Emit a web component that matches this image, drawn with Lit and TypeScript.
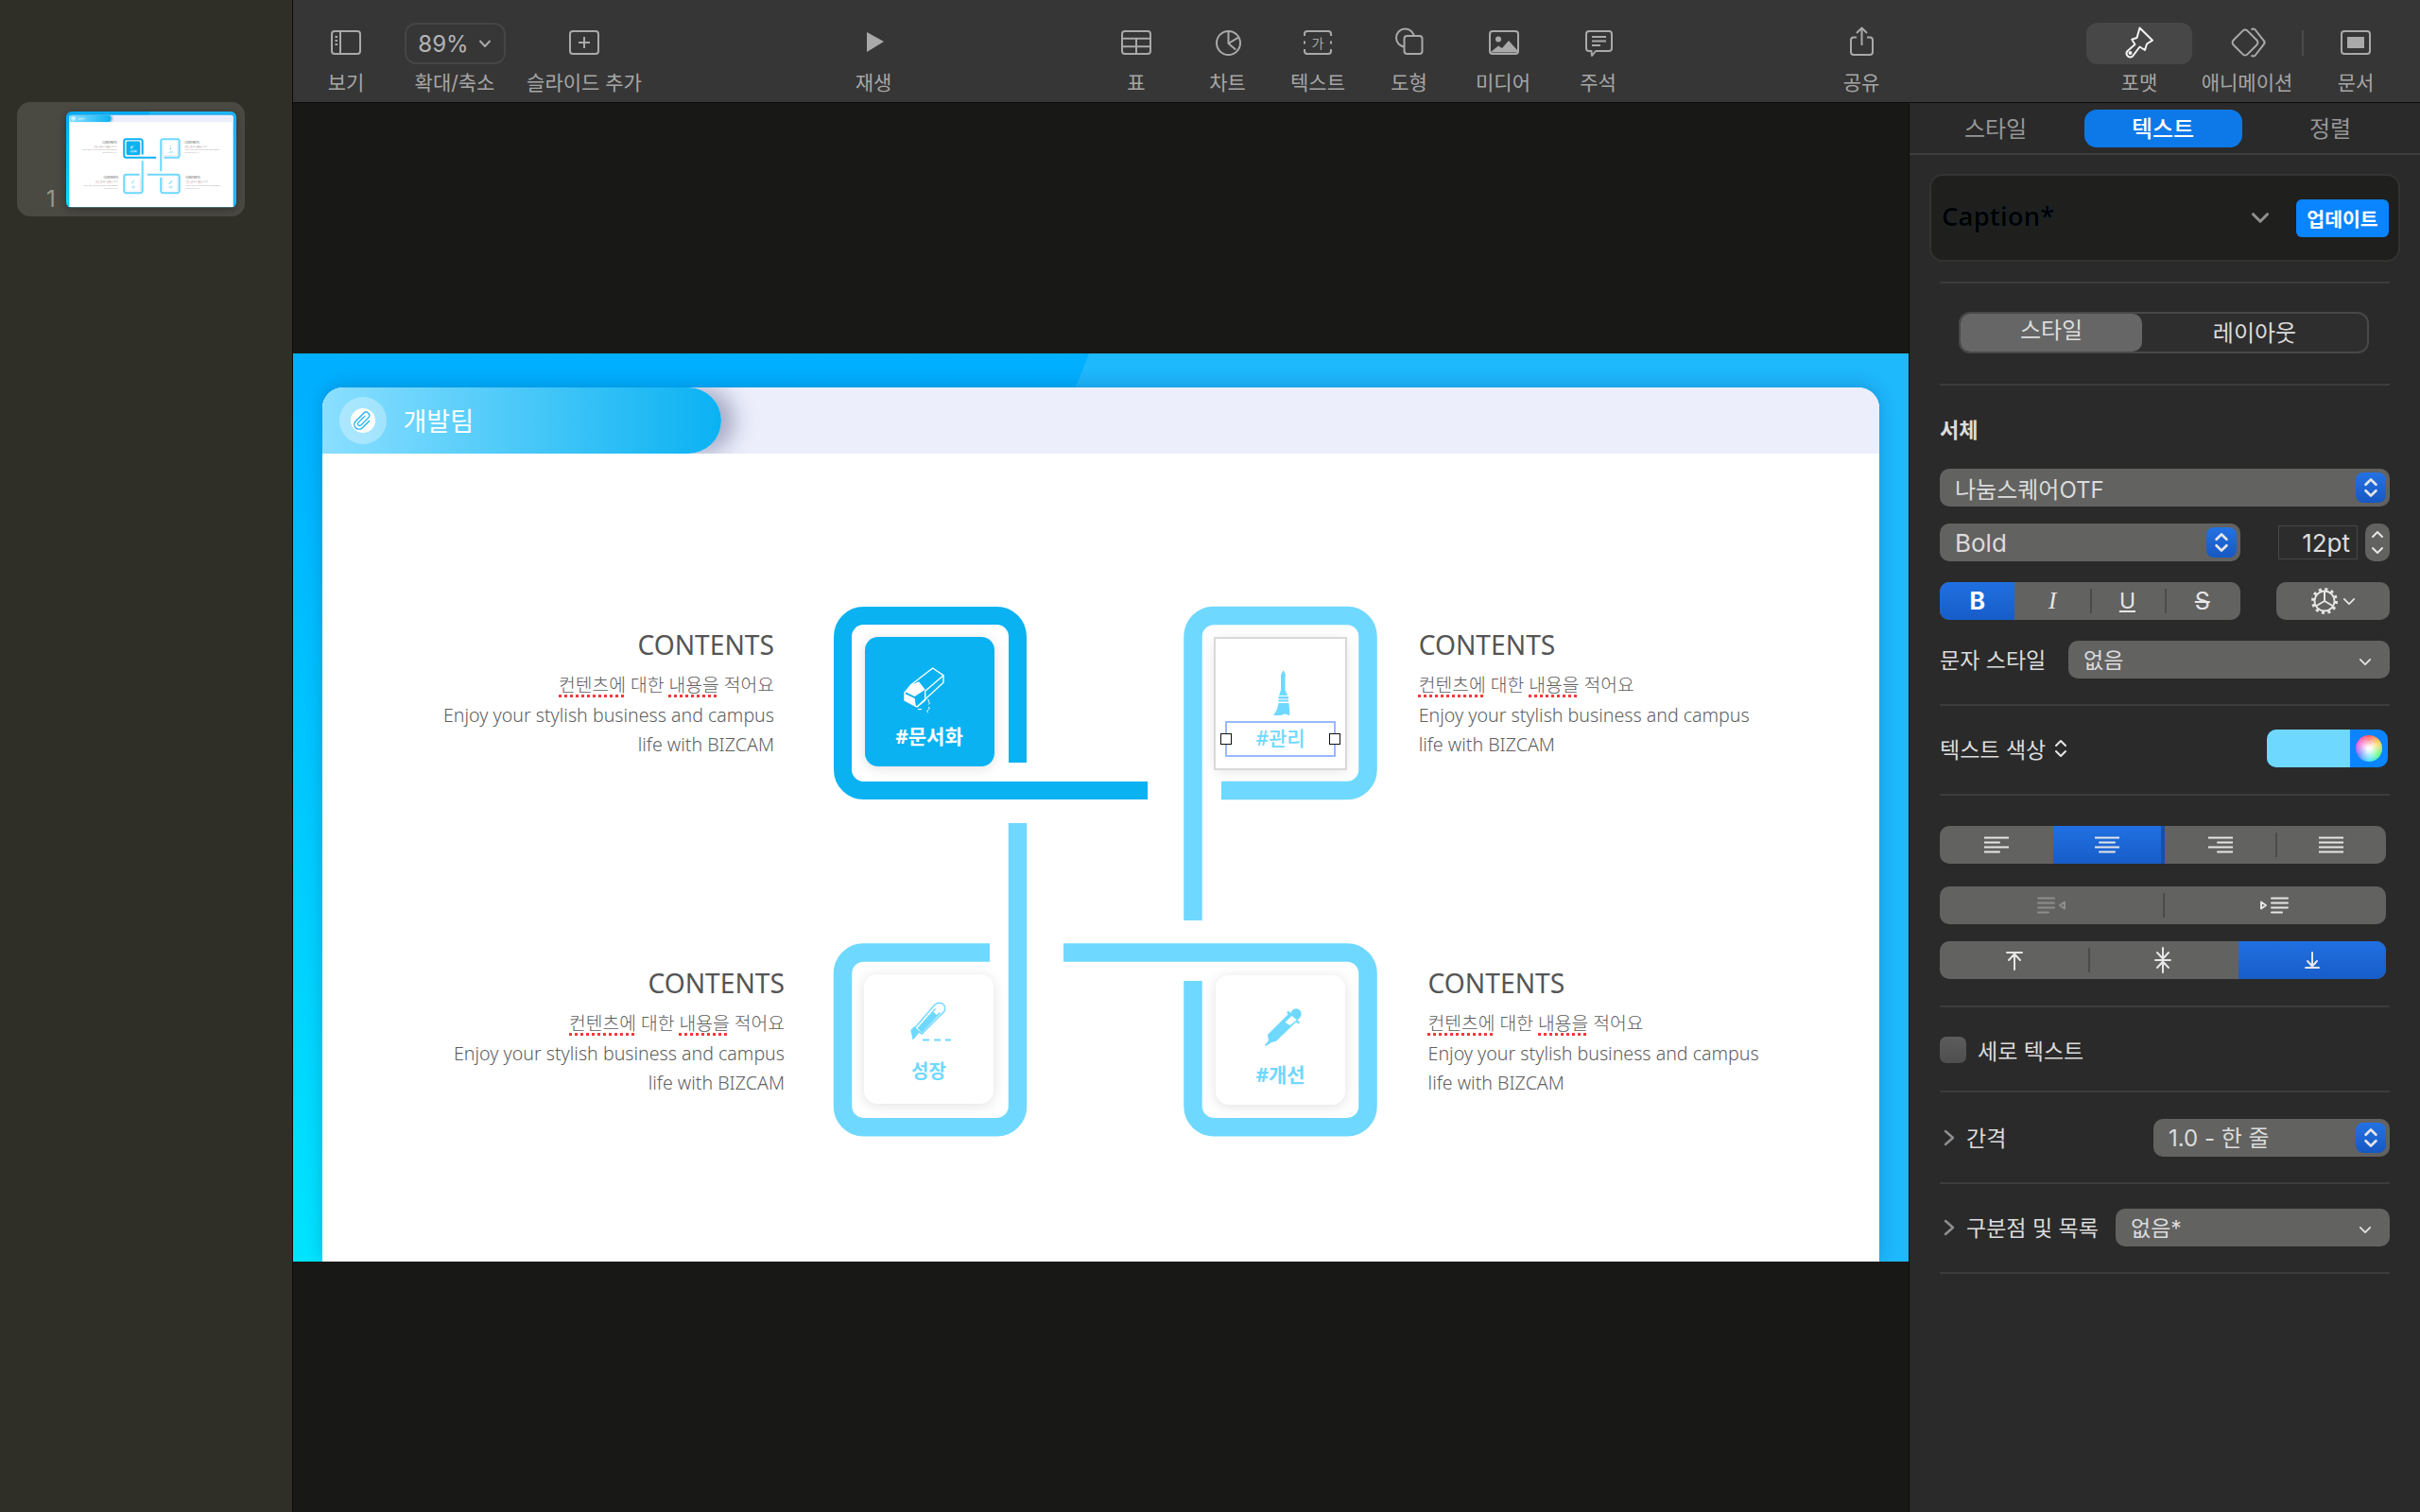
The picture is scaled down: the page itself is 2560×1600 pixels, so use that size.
import { LitElement, html, css, svg } from 'lit';
import { customElement, property } from 'lit/decorators.js';

const UI_FONT = css`Inter, "Noto Sans CJK KR", sans-serif`;
const SLIDE_FONT = css`"Noto Sans", "Noto Sans CJK KR", sans-serif`;

// toolbar icons share a 40x44 box, the label sits under it
const toolIcons: Record<string, unknown> = {
  view: svg`<rect x="5" y="9" width="30" height="24" rx="3"/><path d="M14 9V33M8.5 15h2.5M8.5 19h2.5M8.5 23h2.5"/>`,
  add: svg`<rect x="5" y="9" width="30" height="24" rx="3"/><path d="M20 15V27M14 21H26"/>`,
  play: svg`<path class="solid" d="M13 10L31 20L13 31Z"/>`,
  table: svg`<rect x="5" y="9" width="30" height="24" rx="3"/><path d="M5 16.7H35M5 25.3H35M20 16.7V33"/>`,
  chart: svg`<circle cx="20.5" cy="21.5" r="12.5"/><path d="M20.5 9V22L31.5 15.3M20.5 22L28.2 28.5"/>`,
  text: svg`<path d="M6 14V12a3 3 0 0 1 3-3H31a3 3 0 0 1 3 3V14M6 28V30a3 3 0 0 0 3 3H31a3 3 0 0 0 3-3V28M6 19.5V22.5M34 19.5V22.5"/><text x="20" y="26.5" text-anchor="middle" class="glyph">가</text>`,
  shape: svg`<circle cx="15.5" cy="16" r="9.5"/><rect class="cover" x="14.5" y="14" width="19" height="19" rx="3"/>`,
  media: svg`<rect x="6" y="9" width="30" height="24" rx="3"/><circle class="solid" cx="15" cy="17.5" r="3"/><path class="solid" d="M7 31L15 24.5L19 27L26 19L35 29V31.5H7Z"/>`,
  note: svg`<path d="M10 9H31a3 3 0 0 1 3 3V27a3 3 0 0 1-3 3H17L13 35L12.5 30H10a3 3 0 0 1-3-3V12a3 3 0 0 1 3-3Z"/><path d="M13 15H28M13 19.5H28M13 24H22"/>`,
  share: svg`<path d="M15 15.5H12a3 3 0 0 0-3 3V31a3 3 0 0 0 3 3H29a3 3 0 0 0 3-3V18.5a3 3 0 0 0-3-3H26M20.5 24V6M15 11L20.5 5.5L26 11"/>`,
  format: svg`<path class="hot" d="M20.5 5.5L34 18.7L28 22.5L26 29L20.5 25.5L13 35.5A4 4 0 0 1 7 30.5L15.5 23L12.2 17.8L17.5 16Z"/><circle class="hot" cx="10.5" cy="32" r="1"/>`,
  anim: svg`<rect x="7.5" y="10.5" width="21" height="21" rx="3.5" transform="rotate(45 18 21)"/><path d="M24.5 7.5a3 3 0 0 1 4.2 0L37.6 18.8a3.2 3.2 0 0 1 0 4.4L28.7 34.5a3 3 0 0 1-4.2 0"/>`,
  doc: svg`<rect x="5" y="9" width="30" height="24" rx="3"/><rect class="solid" x="11" y="15" width="18" height="12"/>`,
};

const TOOLS = [
  { id: 'view', label: '보기', w: 80, ml: 16 },
  { id: 'zoom', label: '확대/축소', w: 107, ml: 21.5 },
  { id: 'add', label: '슬라이드 추가', w: 130, ml: 18.5 },
  { id: 'play', label: '재생', w: 80, ml: 201 },
  { id: 'table', label: '표', w: 96, ml: 190 },
  { id: 'chart', label: '차트', w: 97, ml: 0 },
  { id: 'text', label: '텍스트', w: 94, ml: 0 },
  { id: 'shape', label: '도형', w: 99, ml: 0 },
  { id: 'media', label: '미디어', w: 100, ml: 0 },
  { id: 'note', label: '주석', w: 101, ml: 0 },
  { id: 'share', label: '공유', w: 80, ml: 188 },
  { id: 'format', label: '포맷', w: 112, ml: 198 },
  { id: 'anim', label: '애니메이션', w: 116, ml: 0 },
  { id: 'doc', label: '문서', w: 114, ml: 0 },
];

@customElement('mac-toolbar')
class MacToolbar extends LitElement {
  static styles = css`
    :host {
      display: flex;
      height: 108px;
      background: #363636;
      border-bottom: 1px solid #0c0c0c;
      font-family: ${UI_FONT};
    }
    .tool {
      position: relative;
      display: flex;
      flex-direction: column;
      align-items: center;
      padding-top: 24px;
      flex: none;
    }
    .tool.doc::before {
      content: '';
      position: absolute;
      left: 0;
      top: 32px;
      height: 27px;
      border-left: 2px solid #4a4a4a;
    }
    .slot {
      height: 44px;
      width: 100%;
      display: flex;
      justify-content: center;
      border-radius: 12px;
    }
    .tool.format .slot { background: #474747; }
    svg { width: 40px; height: 44px; overflow: visible; }
    svg * { fill: none; stroke: #a9a9a9; stroke-width: 2; stroke-linejoin: round; }
    svg .solid { fill: #a9a9a9; stroke: none; }
    svg .cover { fill: #363636; }
    svg .hot { stroke: #f2f2f2; }
    svg .glyph { fill: #a9a9a9; stroke: none; font: 14px "Noto Sans CJK KR", sans-serif; }
    .zoombox {
      box-sizing: border-box;
      width: 100%;
      height: 44px;
      border: 2px solid #454545;
      border-radius: 12px;
      display: flex;
      align-items: center;
      justify-content: center;
      gap: 10px;
      color: #b4b4b4;
      font-size: 24px;
    }
    .zoombox svg { width: 14px; height: 10px; }
    label {
      margin-top: 8px;
      line-height: 24px;
      font-size: 21px;
      color: #a6a6a6;
      white-space: nowrap;
    }
  `;

  render() {
    return TOOLS.map(
      (t) => html`
        <div class="tool ${t.id}" style="width:${t.w}px;margin-left:${t.ml}px">
          ${t.id === 'zoom'
            ? html`<div class="zoombox">89%<svg viewBox="0 0 14 10"><path d="M1.5 2L7 8L12.5 2"/></svg></div>`
            : html`<div class="slot"><svg viewBox="0 0 40 44">${toolIcons[t.id]}</svg></div>`}
          <label>${t.label}</label>
        </div>
      `,
    );
  }
}

const nodeIcons: Record<string, unknown> = {
  eraser: svg`
    <path class="line" d="M33.6 3L45 10.7V18.3L17 44L4 37V29L10.7 20.7Z"/>
    <path class="line" d="M45 10.7L25.7 27.3V37M25.7 37L17 44"/>
    <path class="fill" d="M10.7 20.7L19 17.3L25.7 25.7L14.6 33L5 28.3Z"/>
    <path class="fill" d="M4 30L14.6 35L16 44L4 37Z"/>
    <path class="thin" d="M28 36q3 1 1 2.500q3 1 .5 3M18 46q1 2 2 0q1 2 2 0M29 44q3 1 0 3q-3 2 0 3"/>`,
  brush: svg`
    <path class="fill" d="M32.500 3.300C34.500 6 35.500 8 34.500 11V24L37 30H28L30 24V11C29.500 8 31 6 32.500 3.300Z"/>
    <rect class="fill" x="27.500" y="31" width="10.500" height="2.500"/>
    <rect class="fill" x="27.500" y="34.500" width="10.500" height="2"/>
    <path class="fill" d="M27.500 38H38.500L39.500 51L34 49.500L30 51L22 51C25 47 27 43 27.500 38Z"/>`,
  knife: svg`
    <path class="line" d="M14.300 27.300L36 2Q40-1 44 1Q48 4 46 9L22.200 33Z"/>
    <path class="fill" d="M17.500 27L36 6L42 11L22 32Z"/>
    <path class="hole" d="M34.500 9.500L38 6.500L41 10L37.500 13Z"/>
    <path class="fill" d="M10.300 29L14.300 25L20 31L12.700 39.700Z"/>
    <path class="dash" d="M23 39.500H53"/>`,
  pen: svg`
    <path class="fill" d="M15.900 33L37.700 11.300L36 9L38 8L40.500 10L42 7A5.500 5.500 0 0 1 50 15L47.500 17.500L50 20L48.500 21.500L46 19.500L25 39.700L20 41L14 45L13 44L17 39Z"/>
    <path class="hole" d="M34.500 19.700L41.600 13L46.800 17.300L39.700 23Z"/>`,
};

const NODES = [
  { pos: 'tl', icon: 'eraser', label: '#문서화', side: 'a', variant: 'dark' },
  { pos: 'tr', icon: 'brush', label: '#관리', side: 'b', variant: 'picked' },
  { pos: 'bl', icon: 'knife', label: '성장', side: 'c', variant: '' },
  { pos: 'br', icon: 'pen', label: '#개선', side: 'd', variant: '' },
];

@customElement('slide-view')
class SlideView extends LitElement {
  @property({ type: Boolean }) thumb = false;

  static styles = css`
    :host {
      display: block;
      position: relative;
      width: 1709px;
      height: 961px;
      overflow: hidden;
      background: linear-gradient(180deg, #00aeff 0%, #00e4ff 100%);
      font-family: ${SLIDE_FONT};
    }
    .wedge {
      position: absolute;
      inset: 0;
      background: #1eb8fc;
      clip-path: polygon(842px 0, 1709px 0, 1709px 961px, 460px 961px);
    }
    .panel {
      position: absolute;
      left: 31px;
      right: 31px;
      top: 36px;
      bottom: 0;
      background: #fff;
      border-radius: 22px 22px 0 0;
      box-shadow: 0 -2px 18px rgba(0, 30, 80, 0.22);
      overflow: hidden;
    }
    .head { height: 70px; background: #eceefb; display: flex; overflow: hidden; }
    .pill {
      width: 421.5px;
      box-sizing: border-box;
      padding: 0 0 2px 17.5px;
      display: flex;
      align-items: center;
      gap: 18px;
      background: linear-gradient(90deg, #8adfff, #0ab2f2);
      border-radius: 0 35px 35px 0;
      box-shadow: 14px 0 22px rgba(50, 60, 110, 0.38);
      color: #fff;
      font-size: 27px;
    }
    .pin {
      width: 50px;
      height: 50px;
      margin-top: 2px;
      border-radius: 50%;
      background: rgba(255, 255, 255, 0.32);
      display: flex;
      align-items: center;
      justify-content: center;
    }
    .pin span {
      width: 26px;
      height: 26px;
      border-radius: 50%;
      background: #fff;
      display: flex;
    }
    .pin svg { width: 26px; height: 26px; fill: none; stroke: #12aef0; stroke-width: 1.2; }
    .lines {
      position: absolute;
      inset: 0;
      width: 100%;
      height: 100%;
      fill: none;
      stroke: #6fd8ff;
      stroke-width: 19.5;
    }
    .lines .main { stroke: #0ab2f2; stroke-width: 19; }

    .node {
      position: absolute;
      box-sizing: border-box;
      width: 137px;
      height: 137px;
      padding-top: 30px;
      border-radius: 14px;
      background: #fff;
      color: #6fd8ff;
      box-shadow: 0 2px 14px rgba(0, 0, 0, 0.12);
      display: flex;
      flex-direction: column;
      align-items: center;
    }
    .node.tl { left: 604.500px; top: 300px; }
    .node.tr { left: 976px; top: 302px; }
    .node.bl { left: 604px; top: 657px; }
    .node.br { left: 976px; top: 658px; }
    .node.dark { background: #0ab2f2; color: #fff; }
    .node svg { width: 60px; height: 52px; flex: none; overflow: visible; }
    .node .fill { fill: currentColor; }
    .node .line { fill: none; stroke: currentColor; stroke-width: 1.4; }
    .node .thin { fill: none; stroke: currentColor; stroke-width: 1; }
    .node .hole { fill: #fff; }
    .node.dark .hole { fill: #0ab2f2; }
    .node .dash { fill: none; stroke: currentColor; stroke-width: 2; stroke-dasharray: 7 5; }
    .node b { margin-top: 10px; line-height: 26px; font-size: 21px; font-weight: 700; }
    .node.bl b { font-size: 20px; margin-top: 8px; }
    .node.picked { outline: 2px solid #d9d9d9; outline-offset: 0; border-radius: 0; }
    .node.picked b { margin-top: 10px; font-weight: 500; }
    .box {
      position: absolute;
      left: 9.500px;
      top: 87px;
      width: 117px;
      height: 37.500px;
      box-sizing: border-box;
      border: 2px solid #9ab8ff;
    }
    .box i {
      position: absolute;
      top: 11px;
      width: 12px;
      height: 12px;
      box-sizing: border-box;
      background: #fff;
      border: 1.500px solid #111;
    }
    .box i:first-child { left: -7px; }
    .box i:last-child { right: -7px; }

    .copy {
      position: absolute;
      width: 420px;
      color: #5e5e5e;
      font-size: 19.600px;
      font-weight: 300;
      line-height: 31.500px;
      white-space: nowrap;
    }
    .copy h3 {
      margin: 0 0 7px;
      line-height: 40px;
      font-size: 28.200px;
      font-weight: 400;
      color: #555;
    }
    .copy p { margin: 0; }
    .copy .ko { font-size: 19.300px; }
    .copy u { text-decoration: underline dotted #f3393b 2.500px; text-underline-offset: 3px; }
    .copy.a { left: 89px; top: 288px; text-align: right; }
    .copy.b { left: 1190.700px; top: 288px; }
    .copy.c { left: 100px; top: 646px; text-align: right; }
    .copy.d { left: 1200.600px; top: 646px; }
  `;

  render() {
    return html`
      <div class="wedge"></div>
      <div class="panel">
        <div class="head">
          <div class="pill">
            <div class="pin">
              <span>
                <svg viewBox="-13 -13 26 26">
                  <g transform="rotate(45)"><path d="M-2-5V5a2 2 0 0 0 4 0V-6a3.500 3.500 0 0 0-7 0V6a5 5 0 0 0 10 0V-5"/></g>
                </svg>
              </span>
            </div>
            개발팀
          </div>
        </div>
      </div>
      <svg class="lines" viewBox="0 0 1709 961">
        <path d="M952 600V299.500a22 22 0 0 1 22-22H1115a22 22 0 0 1 22 22V440.500a22 22 0 0 1-22 22H982"/>
        <path d="M766.500 497V796.700a22 22 0 0 1-22 22H603.500a22 22 0 0 1-22-22V656a22 22 0 0 1 22-22H737"/>
        <path d="M952 664V796.700a22 22 0 0 0 22 22H1115a22 22 0 0 0 22-22V656a22 22 0 0 0-22-22H815"/>
        <path class="main" d="M766.500 433V299.500a22 22 0 0 0-22-22H603.500a22 22 0 0 0-22 22V440.500a22 22 0 0 0 22 22H904"/>
      </svg>
      ${NODES.map(
        (n) => html`
          <div class="copy ${n.side}">
            <h3>CONTENTS</h3>
            <p class="ko"><u>컨텐츠에</u> 대한 <u>내용을</u> 적어요</p>
            <p>Enjoy your stylish business and campus</p>
            <p>life with BIZCAM</p>
          </div>
          <div class="node ${n.pos} ${this.thumb && n.variant === 'picked' ? '' : n.variant}">
            <svg viewBox="0 0 60 52">${nodeIcons[n.icon]}</svg>
            <b>${n.label}</b>
            ${n.variant === 'picked' && !this.thumb ? html`<div class="box"><i></i><i></i></div>` : ''}
          </div>
        `,
      )}
    `;
  }
}

const chevron = html`<svg class="chev" viewBox="0 0 16 10"><path d="M2 2L8 8L14 2"/></svg>`;
const stepper = html`<span class="step"><svg viewBox="0 0 16 24"><path d="M3 9L8 4L13 9M3 15L8 20L13 15"/></svg></span>`;
const alignIcon = (rows: number[][]) => svg`
  <svg class="lines4" viewBox="0 0 26 18">
    ${rows.map(([x1, x2], i) => svg`<path d="M${x1} ${1.5 + i * 5}H${x2}"/>`)}
  </svg>`;

@customElement('format-inspector')
class FormatInspector extends LitElement {
  static styles = css`
    :host {
      display: block;
      box-sizing: border-box;
      width: 541px;
      flex: none;
      background: #2a2a2a;
      border-left: 1px solid #0c0c0c;
      font-family: ${UI_FONT};
      font-size: 23px;
      color: #dcdcdc;
    }
    .t { margin-bottom: 3px; }
    .tabs {
      height: 55px;
      box-sizing: border-box;
      padding: 7px 0 0 2.500px;
      display: grid;
      grid-template-columns: repeat(3, 177px);
      border-bottom: 2px solid #3c3c3c;
    }
    .tabs div {
      height: 40px;
      box-sizing: border-box;
      padding-bottom: 3px;
      margin: 0 5px;
      border-radius: 13px;
      display: flex;
      align-items: center;
      justify-content: center;
      font-size: 24px;
      color: #979797;
    }
    .tabs .on { background: #0d79e8; color: #fff; font-weight: 500; }
    .body { padding: 20px 32px 0 32px; display: flex; flex-direction: column; }

    .style-box {
      margin: 0 -11px 0 -11px;
      height: 93px;
      box-sizing: border-box;
      padding: 0 10px 0 11px;
      border: 2px solid #333;
      border-radius: 14px;
      background: #1f1f1d;
      display: flex;
      align-items: center;
    }
    .caption {
      font-family: "Noto Sans", sans-serif;
      font-size: 27.500px;
      font-weight: 600;
      color: #000;
      text-shadow: 0 0 1px rgba(20, 110, 170, 0.55);
      flex: 1;
      margin-bottom: 4px;
    }
    .style-box .chev { width: 20px; height: 13px; margin-right: 28px; }
    .style-box .chev path { stroke: #8f8f8f; stroke-width: 2.500; }
    .update {
      width: 98px;
      height: 40px;
      border-radius: 6px;
      background: #0b84ff;
      color: #fff;
      font-size: 20.500px;
      font-weight: 700;
      display: flex;
      align-items: center;
      justify-content: center;
    }
    hr { margin: 21px 0 0; border: 0; height: 2px; background: #3c3c3c; width: 476px; flex: none; }
    hr.s2 { margin-top: 32px; }
    hr.s3 { margin-top: 27px; }
    hr.s4 { margin-top: 28px; }
    hr.s5 { margin-top: 29px; }

    .segment {
      margin: 30px 0 0 20px;
      width: 434px;
      height: 44px;
      box-sizing: border-box;
      border: 2px solid #484848;
      border-radius: 12px;
      background: #2e2e2e;
      display: grid;
      grid-template-columns: 192px 1fr;
      align-items: center;
      text-align: center;
      font-size: 24px;
    }
    .segment div { padding-bottom: 3px; }
    .segment .on { height: 40px; box-sizing: border-box; line-height: 36px; background: #666; border-radius: 10px; }

    .heading { margin-top: 32px; line-height: 30px; font-size: 22px; font-weight: 700; }
    .select {
      height: 40px;
      box-sizing: border-box;
      padding: 0 4px 0 16px;
      background: #626261;
      border-radius: 10px;
      display: flex;
      align-items: center;
      justify-content: space-between;
      font-size: 24px;
      white-space: nowrap;
    }
    .select.plain { padding-right: 19px; font-size: 23px; }
    .select.plain .chev { margin-top: 5px; width: 14px; height: 9px; }
    .font { margin-top: 26px; }
    .step {
      width: 32px;
      height: 32px;
      border-radius: 8px;
      background: linear-gradient(180deg, #2472e4, #1658c2);
      display: flex;
      align-items: center;
      justify-content: center;
    }
    svg path { fill: none; stroke: #e6e6e6; stroke-width: 2; stroke-linecap: round; stroke-linejoin: round; }
    .step svg { width: 18px; height: 26px; }
    .step svg path { stroke-width: 2.500; }
    .chev { width: 16px; height: 10px; flex: none; }
    .row { display: flex; align-items: center; justify-content: space-between; }
    .r1 { margin-top: 18px; height: 40px; }
    .r2 { margin-top: 22px; height: 40px; }
    .weight { width: 317.500px; font-size: 26px; }
    .size {
      width: 84px;
      height: 36px;
      margin: 0 8px 0 auto;
      box-sizing: border-box;
      padding-right: 7px;
      background: #2c2c2c;
      border: 1px solid #484848;
      text-align: right;
      line-height: 36px;
      font-size: 26px;
    }
    .spin {
      width: 26px;
      height: 40px;
      border-radius: 10px;
      background: #626261;
      display: flex;
      align-items: center;
      justify-content: center;
    }
    .spin svg { width: 16px; height: 32px; }
    .seg {
      height: 40px;
      background: #626261;
      border-radius: 10px;
      display: grid;
      align-items: center;
      overflow: hidden;
      justify-items: center;
    }
    .seg > div {
      position: relative;
      width: 100%;
      height: 100%;
      display: flex;
      align-items: center;
      justify-content: center;
    }
    .seg .on { background: linear-gradient(180deg, #2070e2, #175dc8); }
    .seg .sep::before {
      content: '';
      position: absolute;
      left: 0;
      top: 7px;
      bottom: 7px;
      border-left: 2px solid #4b4b4b;
    }
    .bius { width: 317.500px; grid-template-columns: repeat(4, 1fr); font-size: 25px; color: #e6e6e6; }
    .bius b { font-weight: 700; color: #fff; }
    .bius i { font-family: "Liberation Serif", serif; }
    .bius .u { text-decoration: underline; font-family: Inter, sans-serif; font-size: 23px; }
    .bius .s { text-decoration: line-through; }
    .gear {
      width: 120px;
      height: 40px;
      border-radius: 10px;
      background: #626261;
      display: flex;
      align-items: center;
      justify-content: center;
      gap: 4px;
    }
    .gear svg.cog { width: 30px; height: 30px; }
    .gear .chev { width: 14px; height: 9px; }
    .char-select { width: 340px; }
    .sect { margin-top: 25px; height: 40px; }
    .updown { display: flex; align-items: center; gap: 8px; }
    .updown svg { width: 16px; height: 24px; }
    .well {
      width: 127.500px;
      height: 40px;
      margin-right: 2.500px;
      border-radius: 10px;
      overflow: hidden;
      display: flex;
      background: #0b84ff;
    }
    .well span { width: 88px; background: #6fd8ff; }
    .well em {
      width: 28px;
      height: 28px;
      margin: 6px 0 0 6px;
      border-radius: 50%;
      background:
        radial-gradient(circle, rgba(255, 255, 255, 0.95) 10%, rgba(255, 255, 255, 0) 70%),
        conic-gradient(#ff5a5a, #ffd24a, #5aff7a, #4ae0ff, #6a7aff, #ff5ad2, #ff5a5a);
    }
    .align { width: 472px; height: 40px; margin-top: 32px; grid-template-columns: 120px 118px 117px 117px; }
    .align .on { border-right: 4px solid #1450ac; box-sizing: border-box; }
    .indent { width: 472px; margin-top: 24px; grid-template-columns: 1fr 1fr; }
    .valign { width: 472px; margin-top: 18px; grid-template-columns: 157px 158.500px 156.500px; }
    .lines4 { width: 26px; height: 18px; }
    .dim path { stroke: #8e8e8e; }
    .indent svg { width: 30px; height: 18px; }
    .valign svg { width: 20px; height: 28px; }
    .check {
      margin-top: 31px;
      height: 28px;
      display: flex;
      align-items: center;
      gap: 12px;
    }
    .check span { width: 28px; height: 28px; border-radius: 7px; background: linear-gradient(180deg, #5c5c5c, #4e4e4e); }
    .disclose { display: flex; align-items: center; gap: 12px; }
    .disclose svg { width: 12px; height: 18px; margin-left: 4px; }
    .disclose svg path { stroke: #8e8e8e; stroke-width: 2.500; }
    .r3 { height: 40px; margin-top: 28px; }
    .r4 { height: 40px; margin-top: 26px; }
    .spacing { width: 250px; }
    .bullets { width: 290px; }
  `;

  render() {
    return html`
      <div class="tabs"><div>스타일</div><div class="on">텍스트</div><div>정렬</div></div>
      <div class="body">
        <div class="style-box">
          <span class="caption">Caption*</span>
          ${chevron}
          <div class="update">업데이트</div>
        </div>
        <hr />
        <div class="segment"><div class="on">스타일</div><div>레이아웃</div></div>
        <hr class="s2" />
        <div class="heading">서체</div>
        <div class="select font">나눔스퀘어OTF ${stepper}</div>
        <div class="row r1">
          <div class="select weight">Bold ${stepper}</div>
          <div class="size">12pt</div>
          <div class="spin"><svg viewBox="0 0 16 32"><path d="M3 10L8 5L13 10M3 22L8 27L13 22"/></svg></div>
        </div>
        <div class="row r2">
          <div class="seg bius">
            <div class="on"><b>B</b></div>
            <div><i>I</i></div>
            <div class="sep"><span class="u">U</span></div>
            <div class="sep"><span class="s">S</span></div>
          </div>
          <div class="gear">
            <svg class="cog" viewBox="0 0 30 30">
              <circle cx="15" cy="15" r="10.500" fill="none" stroke="#e6e6e6" stroke-width="1.800" />
              <circle cx="15" cy="15" r="12.500" fill="none" stroke="#e6e6e6" stroke-width="3" stroke-dasharray="3 3.540" />
              <path d="M15 15V5M15 15L6.500 20M15 15L23.500 20" />
            </svg>
            ${chevron}
          </div>
        </div>
        <div class="row r2">
          <span class="t">문자 스타일</span>
          <div class="select plain char-select"><span class="t">없음</span> ${chevron}</div>
        </div>
        <hr class="s3" />
        <div class="row sect">
          <div class="updown">텍스트 색상 <svg viewBox="0 0 16 24"><path d="M3 9L8 4L13 9M3 15L8 20L13 15" /></svg></div>
          <div class="well"><span></span><em></em></div>
        </div>
        <hr class="s4" />
        <div class="seg align">
          <div>${alignIcon([[0, 26], [0, 16], [0, 26], [0, 16]])}</div>
          <div class="on">${alignIcon([[0, 26], [5, 21], [0, 26], [5, 21]])}</div>
          <div>${alignIcon([[0, 26], [10, 26], [0, 26], [10, 26]])}</div>
          <div class="sep">${alignIcon([[0, 26], [0, 26], [0, 26], [0, 26]])}</div>
        </div>
        <div class="seg indent">
          <div class="dim">
            <svg viewBox="0 0 30 18">
              <path d="M1 1.500H18M1 6.500H18M1 11.500H18M1 16.500H12" />
              <path d="M29 5.500L24 9L29 12.500Z" />
            </svg>
          </div>
          <div class="sep">
            <svg viewBox="0 0 30 18">
              <path d="M12 1.500H29M12 6.500H29M12 11.500H29M12 16.500H23" />
              <path d="M1 5.500L6 9L1 12.500Z" />
            </svg>
          </div>
        </div>
        <div class="seg valign">
          <div><svg viewBox="0 0 20 28"><path d="M2 6H18M10 24V7M4 14L10 7.500L16 14" /></svg></div>
          <div class="sep"><svg viewBox="0 0 20 28"><path d="M2 14H18M10 1V12M4 6L10 12.500L16 6M10 27V16M4 22L10 15.500L16 22" /></svg></div>
          <div class="on"><svg viewBox="0 0 20 28"><path d="M3 22H17M10 6V20M5 15L10 20.500L15 15" /></svg></div>
        </div>
        <hr class="s4" />
        <div class="check"><span></span>세로 텍스트</div>
        <hr class="s5" />
        <div class="row r3">
          <div class="disclose"><svg viewBox="0 0 12 18"><path d="M2 2L10 9L2 16" /></svg><span class="t">간격</span></div>
          <div class="select spacing"><span class="t">1.0 - 한 줄</span> ${stepper}</div>
        </div>
        <hr class="s3" />
        <div class="row r4">
          <div class="disclose"><svg viewBox="0 0 12 18"><path d="M2 2L10 9L2 16" /></svg><span class="t">구분점 및 목록</span></div>
          <div class="select plain bullets"><span class="t">없음*</span> ${chevron}</div>
        </div>
        <hr class="s3" />
      </div>
    `;
  }
}

@customElement('app-root')
class AppRoot extends LitElement {
  static styles = css`
    :host {
      display: grid;
      grid-template-columns: 310px 1fr;
      width: 2560px;
      height: 1600px;
      overflow: hidden;
      background: #181816;
    }
    .side {
      background: #2f2e27;
      border-right: 1px solid #0c0c0c;
      padding: 108px 0 0 18px;
      box-sizing: border-box;
    }
    .card {
      position: relative;
      width: 241px;
      height: 121px;
      background: #4a4942;
      border-radius: 14px;
      box-sizing: border-box;
      padding: 10px 0 0 52px;
    }
    .num {
      position: absolute;
      left: 31px;
      bottom: 4px;
      color: #98978f;
      font: 24px Inter, sans-serif;
    }
    .thumb {
      width: 180px;
      height: 102px;
      overflow: hidden;
      border-radius: 6px;
      box-shadow: 0 2px 8px rgba(0, 0, 0, 0.3);
    }
    .thumb slide-view { transform: scale(0.1053); transform-origin: 0 0; }
    .main { display: flex; flex-direction: column; min-width: 0; }
    .work { flex: 1; display: flex; }
    .canvas { flex: 1; padding-top: 265px; }
  `;

  render() {
    return html`
      <aside class="side">
        <div class="card">
          <span class="num">1</span>
          <div class="thumb"><slide-view thumb></slide-view></div>
        </div>
      </aside>
      <div class="main">
        <mac-toolbar></mac-toolbar>
        <div class="work">
          <div class="canvas"><slide-view></slide-view></div>
          <format-inspector></format-inspector>
        </div>
      </div>
    `;
  }
}
